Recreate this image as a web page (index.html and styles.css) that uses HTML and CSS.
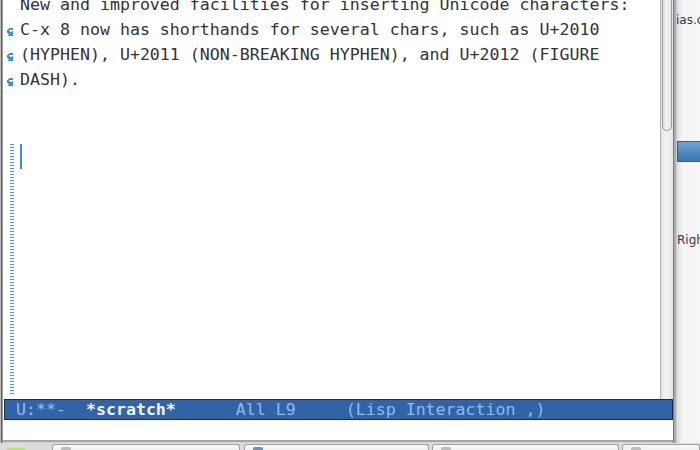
FILE: index.html
```html
<!DOCTYPE html>
<html>
<head>
<meta charset="utf-8">
<title>Emacs scratch</title>
<link rel="stylesheet" href="styles.css">
</head>
<body>
<div class="screen">
  <div class="desk">
    <div class="emacs">
      <div class="window">
        <div class="buffer">
          <div class="line first"><span class="fringe"></span><span class="txt">New and improved facilities for inserting Unicode characters:</span></div>
          <div class="line"><span class="fringe"><svg class="curly" viewBox="0 0 8 8" width="8" height="8"><path d="M2 0h4v1h-4zM1 1h5v1h-5zM0 2h2v1h-2zM0 3h3v1h-3zM5 3h1v1h-1zM0 4h6v1h-6zM1 5h5v1h-5zM2 6h4v1h-4zM1 7h5v1h-5z"/></svg></span><span class="txt">C-x 8 now has shorthands for several chars, such as U+2010</span></div>
          <div class="line"><span class="fringe"><svg class="curly" viewBox="0 0 8 8" width="8" height="8"><path d="M2 0h4v1h-4zM1 1h5v1h-5zM0 2h2v1h-2zM0 3h3v1h-3zM5 3h1v1h-1zM0 4h6v1h-6zM1 5h5v1h-5zM2 6h4v1h-4zM1 7h5v1h-5z"/></svg></span><span class="txt">(HYPHEN), U+2011 (NON-BREAKING HYPHEN), and U+2012 (FIGURE</span></div>
          <div class="line"><span class="fringe"><svg class="curly" viewBox="0 0 8 8" width="8" height="8"><path d="M2 0h4v1h-4zM1 1h5v1h-5zM0 2h2v1h-2zM0 3h3v1h-3zM5 3h1v1h-1zM0 4h6v1h-6zM1 5h5v1h-5zM2 6h4v1h-4zM1 7h5v1h-5z"/></svg></span><span class="txt">DASH).</span></div>
          <div class="line"><span class="fringe"></span></div>
          <div class="line"><span class="fringe"></span></div>
          <div class="tail">
            <div class="fringe empty"><div class="dashes"></div></div>
            <div class="cursor"></div>
          </div>
        </div>
        <div class="scrollbar"><div class="thumb"></div></div>
      </div>
      <div class="modeline"><span class="ml-dim"> U:**-  </span><span class="ml-buf">*scratch*</span><span class="ml-dim">      All L9     (Lisp Interaction ,)</span></div>
      <div class="echo"></div>
    </div>
    <div class="bgwin">
      <div class="bg-file">ias.c</div>
      <div class="bg-sel"></div>
      <div class="bg-right">Righ</div>
    </div>
  </div>
  <div class="taskbar">
    <div class="tb-start"><span class="tb-green"></span></div>
    <div class="tb-btn b1"><span class="tb-icon grey"></span></div>
    <div class="tb-btn b2"><span class="tb-icon blue"></span></div>
    <div class="tb-btn b3"><span class="tb-icon grey"></span></div>
    <div class="tb-btn b4"><span class="tb-icon grey"></span></div>
  </div>
</div>
</body>
</html>
```

FILE: styles.css
```css
* { box-sizing: border-box; }
html, body { margin: 0; padding: 0; }
body {
  width: 700px;
  height: 450px;
  overflow: hidden;
  background: #e4e4e4;
}
.screen {
  display: flex;
  flex-direction: column;
  width: 700px;
  height: 450px;
}
.desk {
  display: flex;
  height: 443px;
}
.emacs {
  width: 677px;
  height: 443px;
  display: flex;
  flex-direction: column;
  padding: 0 4px 3px 3px;
  background:
    linear-gradient(to right, #bdbdbd 0 1px, #5f5f5f 1px 2px, #9c9c9c 2px 3px, transparent 3px),
    linear-gradient(to left, #d0d0d0 0 1px, #acacac 1px 3px, #7b7b7b 3px 4px, transparent 4px),
    linear-gradient(to top, #d6d6d6 0 1px, #a6a6a6 1px 3px, transparent 3px),
    #ffffff;
}
.window {
  display: flex;
  height: 399px;
}
.buffer {
  flex: 1;
  display: flex;
  flex-direction: column;
  overflow: hidden;
  background: #fff;
  font-family: "DejaVu Sans Mono", monospace;
  font-size: 16.6px;
  color: #333333;
}
.line {
  display: flex;
  height: 25px;
  line-height: 25px;
  white-space: pre;
  flex: none;
}
.line.first { margin-top: -8px; }
.fringe {
  width: 17px;
  flex: none;
  display: flex;
  align-items: flex-start;
}
.curly {
  margin: 11px 0 0 4px;
  fill: #3b8fdc;
  shape-rendering: crispEdges;
}
.tail {
  flex: 1;
  display: flex;
}
.fringe.empty {
  padding: 2px 0 4px 7px;
}
.dashes {
  width: 4px;
  height: 100%;
  background: repeating-linear-gradient(to bottom, #4a98de 0 1px, transparent 1px 3px);
}
.cursor {
  width: 2px;
  height: 25px;
  margin-top: 2px;
  background: #3b8fdc;
}
.scrollbar {
  width: 13px;
  flex: none;
  border-left: 1px solid #b4b4b4;
  padding-left: 1px;
  background: linear-gradient(to right, #e2e2e2, #f3f3f3 40%, #e6e6e6);
  overflow: hidden;
}
.thumb {
  width: 10px;
  height: 137px;
  margin-top: -6px;
  border: 1px solid #9a9a9a;
  border-radius: 0 0 5px 5px;
  background: linear-gradient(to right, #dedede, #f4f4f4 45%, #e2e2e2);
}
.modeline {
  height: 21px;
  margin-left: 1px;
  flex: none;
  background: #3262a8;
  border: 1px solid #1c2c4e;
  padding-left: 1px;
  font-family: "DejaVu Sans Mono", monospace;
  font-size: 16.6px;
  line-height: 19px;
  white-space: pre;
  overflow: hidden;
}
.ml-dim { color: #8cbdeb; }
.ml-buf { color: #f4f6fa; font-weight: bold; }
.echo {
  flex: 1;
  background: #fff;
}
.bgwin {
  flex: 1;
  overflow: hidden;
  background: linear-gradient(to right, #dcdcdc, #f4f4f4 5px, #f6f6f6);
  font-family: "DejaVu Sans", sans-serif;
  font-size: 12px;
  color: #3a3a3a;
  white-space: nowrap;
}
.bg-file {
  margin: 13px 0 0 -1px;
  line-height: 14px;
}
.bg-sel {
  margin-top: 114px;
  height: 21px;
  border: 1px solid #2f5f93;
  border-right: none;
  background: linear-gradient(to bottom, #6fa4d4, #4f87c0 55%, #3e76b0);
}
.bg-right {
  margin-top: 71px;
  line-height: 14px;
}
.taskbar {
  flex: 1;
  display: flex;
  background: #dcdcdc;
  padding-left: 3px;
}
.tb-start {
  width: 47px;
  padding: 3px 0 0 4px;
}
.tb-green {
  display: block;
  width: 18px;
  height: 6px;
  border-radius: 4px 4px 0 0;
  background: linear-gradient(to bottom, #d7f0b5, #9ccd5c);
}
.tb-btn {
  margin-top: 1px;
  border: 1px solid #a2a2a2;
  border-bottom: none;
  border-radius: 3px 3px 0 0;
  background: linear-gradient(to bottom, #fafafa, #ececec);
  padding: 2px 0 0 8px;
}
.b1 { width: 188px; margin-left: 2px; }
.b2 { width: 185px; margin-left: 4px; }
.b3 { width: 187px; margin-left: 3px; }
.b4 { flex: 1; margin-left: 3px; }
.tb-icon {
  display: block;
  width: 10px;
  height: 4px;
  border-radius: 2px 2px 0 0;
}
.tb-icon.grey { background: #bdbdbd; }
.tb-icon.blue { background: #6b8fc2; }
```
